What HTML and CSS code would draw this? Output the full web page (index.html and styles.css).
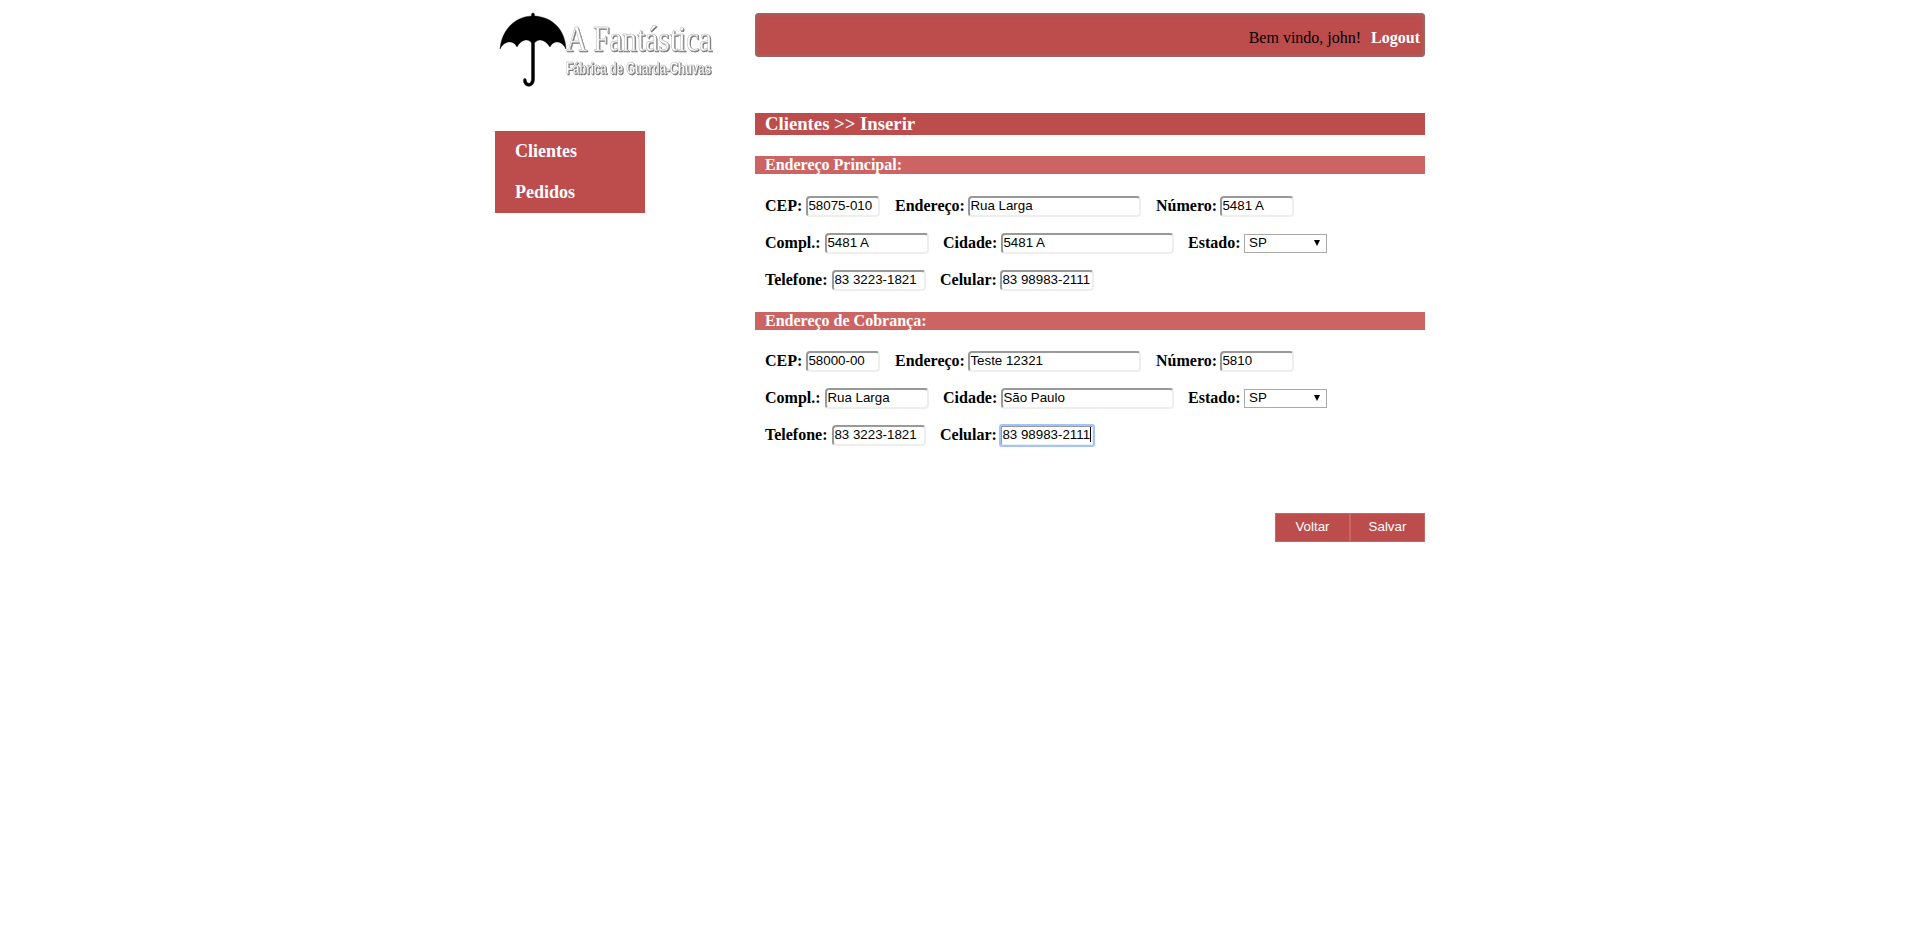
FILE: index.html
```html
<!DOCTYPE html>
<html lang="pt-BR">
<head>
<meta charset="utf-8">
<title>A Fantástica Fábrica de Guarda-Chuvas</title>
<link rel="stylesheet" href="styles.css">
</head>
<body>
<div class="page">
  <aside class="side">
    <svg class="logo" width="230" height="90" viewBox="0 0 230 90">
      <path d="M5 49C7 29 20 17 36.500 16V14.500a1.500 1.500 0 0 1 3 0V16C57 17 70 29 71 49C67 41 59 39 55 47C50 39 43 38 39.500 43V79C39.500 89 28 88 28.500 80a1.400 1.400 0 0 1 2.800 0C32 85 36.500 84 36.500 79V43C34 38 26 39 22 47C18 39 9 41 5 49Z" stroke="#000" stroke-width=".4"/>
      <g class="logo-text">
        <text class="logo-big" transform="translate(71 51) scale(.84 1)">A Fantástica</text>
        <text class="logo-small" transform="translate(71 74) scale(.713 1)">Fábrica de Guarda-Chuvas</text>
      </g>
    </svg>
    <nav class="menu"><a>Clientes</a><a>Pedidos</a></nav>
  </aside>
  <main class="main">
    <header class="top"><span>Bem vindo, john!</span><a class="logout">Logout</a></header>
    <h1 class="title">Clientes &gt;&gt; Inserir</h1>
    <h2 class="section">Endereço Principal:</h2>
    <div class="rows">
      <div class="row">
        <label class="field"><span class="l41">CEP:</span><input class="w74" value="58075-010"></label>
        <label class="field"><span class="l73">Endereço:</span><input class="w173" value="Rua Larga"></label>
        <label class="field"><span class="l64">Número:</span><input class="w74" value="5481 A"></label>
      </div>
      <div class="row">
        <label class="field"><span class="l60">Compl.:</span><input class="w104" value="5481 A"></label>
        <label class="field"><span class="l58">Cidade:</span><input class="w173" value="5481 A"></label>
        <label class="field"><span class="l56">Estado:</span><span class="select">SP<svg width="6" height="6" viewBox="0 0 6 6"><path d="M0 0H6L3 6Z"/></svg></span></label>
      </div>
      <div class="row">
        <label class="field"><span class="l67">Telefone:</span><input class="w94" value="83 3223-1821"></label>
        <label class="field"><span class="l60">Celular:</span><input class="w94" value="83 98983-2111"></label>
      </div>
    </div>
    <h2 class="section">Endereço de Cobrança:</h2>
    <div class="rows">
      <div class="row">
        <label class="field"><span class="l41">CEP:</span><input class="w74" value="58000-00"></label>
        <label class="field"><span class="l73">Endereço:</span><input class="w173" value="Teste 12321"></label>
        <label class="field"><span class="l64">Número:</span><input class="w74" value="5810"></label>
      </div>
      <div class="row">
        <label class="field"><span class="l60">Compl.:</span><input class="w104" value="Rua Larga"></label>
        <label class="field"><span class="l58">Cidade:</span><input class="w173" value="São Paulo"></label>
        <label class="field"><span class="l56">Estado:</span><span class="select">SP<svg width="6" height="6" viewBox="0 0 6 6"><path d="M0 0H6L3 6Z"/></svg></span></label>
      </div>
      <div class="row">
        <label class="field"><span class="l67">Telefone:</span><input class="w94" value="83 3223-1821"></label>
        <label class="field"><span class="l60">Celular:</span><span class="focus w94">83 98983-2111<i class="caret"></i></span></label>
      </div>
    </div>
    <div class="actions"><button>Voltar</button><button>Salvar</button></div>
  </main>
</div>
</body>
</html>
```
FILE: styles.css
```css
* { box-sizing: border-box; }
body { margin: 0; background: #fff; color: #000; font: 16px "Liberation Serif", "Times New Roman", serif; }
.page { display: flex; width: 930px; margin: 0 auto; }
.side { width: 260px; }
.logo { display: block; overflow: visible; }
.logo-text { fill: #fff; stroke: #aaa; stroke-width: .5px; filter: drop-shadow(1px 1px .4px #777); }
.logo-big { font: 35px "Liberation Serif", serif; }
.logo-small { font: bold 16px "Liberation Sans", sans-serif; }
.menu { width: 150px; height: 82px; margin-top: 41px; background: #bd4c4c; }
.menu a { display: block; height: 41px; padding-left: 20px; font-size: 18px; font-weight: bold; line-height: 41px; color: #fff; }
.main { width: 670px; padding-top: 13px; }
.top { display: flex; justify-content: flex-end; gap: 10px; height: 44px; padding: 0 5px 0 0; line-height: 50px; background: #bd4c4c; border-radius: 4px; box-shadow: inset 0 0 5px #808080; }
.logout { font-weight: bold; color: #fff; }
.title { height: 22px; margin: 56px 0 21px; padding-left: 10px; font-size: 18.72px; line-height: 22px; background: #bd4c4c; color: #fff; }
.section { height: 18px; margin: 0; padding-left: 10px; font-size: 16px; line-height: 18px; background: #cc6464; color: #fff; }
.rows { display: flex; flex-direction: column; gap: 16px; padding: 22px 0 21px 10px; }
.section + .rows:nth-last-child(2) { padding-top: 21px; }
.row { display: flex; gap: 15px; height: 21px; }
.row:nth-child(n+2) { gap: 14px; }
.field { display: flex; align-items: flex-start; font-weight: bold; line-height: 19px; white-space: nowrap; }
input, .focus { height: 21px; padding: 0 0 2px .4px; border: 2px solid; border-color: #999 #eee #eee #999; border-radius: 4px; background: #fff; font: 13.333px "Liberation Sans", Arial, sans-serif; color: #000; }
.focus { line-height: 15px; outline: 2px solid #a3c3fb; outline-offset: -1px; border-radius: 2px; }
.caret { display: inline-block; width: 1px; height: 15px; background: #000; vertical-align: top; }
.select { display: flex; justify-content: space-between; width: 83px; height: 19px; margin-top: 1px; padding: 0 6px 0 4px; border: 1px solid #a9a9a9; font: 13.333px/16px "Liberation Sans", Arial, sans-serif; }
.select svg { margin-top: 5px; }
.w74 { width: 74px; } .w94 { width: 94px; } .w104 { width: 104px; } .w173 { width: 173px; }
.l41 { width: 41px; } .l56 { width: 56px; } .l58 { width: 58px; } .l60 { width: 60px; } .l64 { width: 64px; } .l67 { width: 67px; } .l73 { width: 73px; }
.actions { display: flex; justify-content: flex-end; margin-top: 46px; }
.actions button { width: 75px; height: 29px; padding: 0 0 2px; border: 1px solid #cc6464; background: #bd4c4c; font: 13.333px "Liberation Sans", Arial, sans-serif; color: #fff; }
```
